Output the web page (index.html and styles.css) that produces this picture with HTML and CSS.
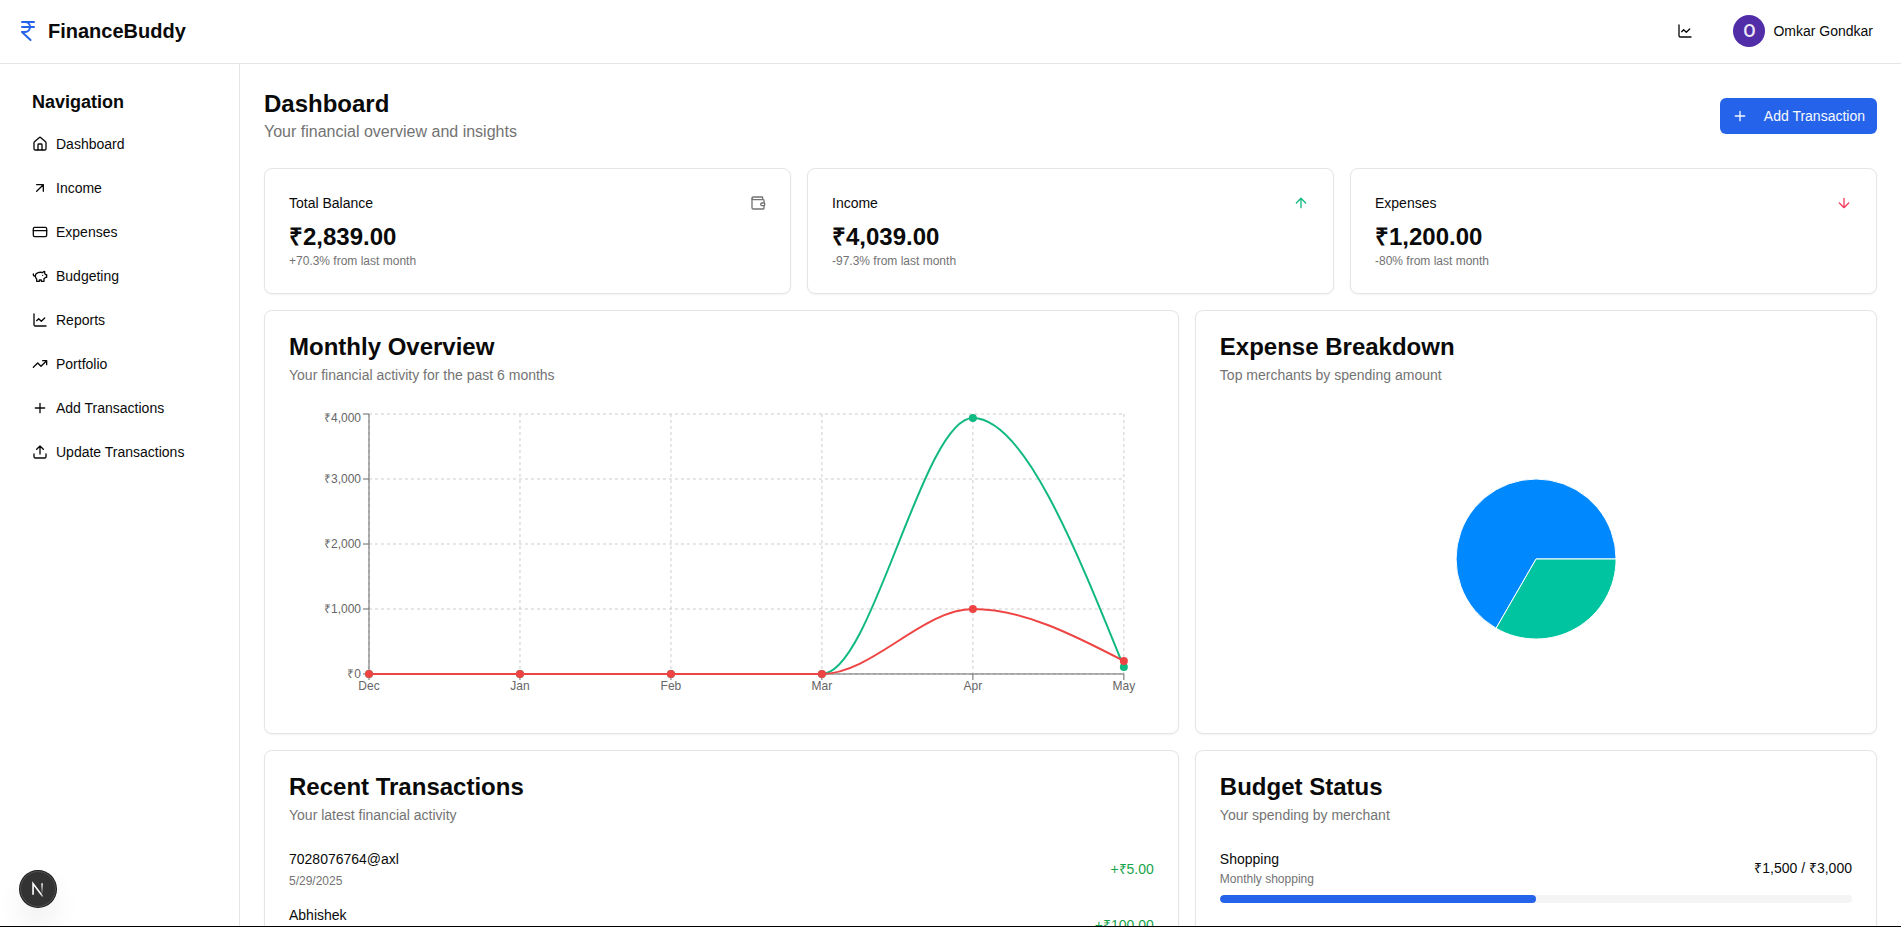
FILE: index.html
```html
<!DOCTYPE html>
<html lang="en">
<head>
<meta charset="utf-8">
<meta name="viewport" content="width=device-width, initial-scale=1">
<title>FinanceBuddy</title>
<link rel="stylesheet" href="styles.css">
</head>
<body>
<svg class="sprite" aria-hidden="true">
  <symbol id="rupee" viewBox="0 0 24 24"><path d="M6 3h12M6 8h12M6 13l8.500 8M6 13h3M9 13c6.667 0 6.667-10 0-10"/></symbol>
  <symbol id="house" viewBox="0 0 24 24"><path d="M15 21v-8a1 1 0 0 0-1-1h-4a1 1 0 0 0-1 1v8"/><path d="M3 10a2 2 0 0 1 .709-1.528l7-5.999a2 2 0 0 1 2.582 0l7 5.999A2 2 0 0 1 21 10v9a2 2 0 0 1-2 2H5a2 2 0 0 1-2-2z"/></symbol>
  <symbol id="arrow-up-right" viewBox="0 0 24 24"><path d="M7 7h10v10M7 17 17 7"/></symbol>
  <symbol id="card" viewBox="0 0 24 24"><rect width="20" height="14" x="2" y="5" rx="2"/><path d="M2 10h20"/></symbol>
  <symbol id="piggy" viewBox="0 0 24 24"><path d="M19 5c-1.500 0-2.800 1.400-3 2-3.500-1.500-11-.3-11 5 0 1.800 0 3 2 4.500V20h4v-2h3v2h4v-4c1-.5 1.700-1 2-2h2v-4h-2c0-1-.5-1.500-1-2V5z"/><path d="M2 9v1c0 1.100.9 2 2 2h1M16 11h.01"/></symbol>
  <symbol id="chart" viewBox="0 0 24 24"><path d="M3 3v16a2 2 0 0 0 2 2h16"/><path d="m19 9-5 5-4-4-3 3"/></symbol>
  <symbol id="trend" viewBox="0 0 24 24"><path d="m22 7-8.500 8.500-5-5L2 17M16 7h6v6"/></symbol>
  <symbol id="plus" viewBox="0 0 24 24"><path d="M5 12h14M12 5v14"/></symbol>
  <symbol id="upload" viewBox="0 0 24 24"><path d="M21 15v4a2 2 0 0 1-2 2H5a2 2 0 0 1-2-2v-4M17 8l-5-5-5 5M12 3v12"/></symbol>
  <symbol id="wallet" viewBox="0 0 24 24"><path d="M19 7V4a1 1 0 0 0-1-1H5a2 2 0 0 0 0 4h15a1 1 0 0 1 1 1v4h-3a2 2 0 0 0 0 4h3a1 1 0 0 0 1-1v-2a1 1 0 0 0-1-1"/><path d="M3 5v14a2 2 0 0 0 2 2h15a1 1 0 0 0 1-1v-4"/></symbol>
  <symbol id="arrow-up" viewBox="0 0 24 24"><path d="m5 12 7-7 7 7M12 19V5"/></symbol>
  <symbol id="arrow-down" viewBox="0 0 24 24"><path d="M12 5v14M19 12l-7 7-7-7"/></symbol>
</svg>

<div class="app">
  <header class="topbar">
    <a class="brand" href="#"><svg class="icon icon-lg"><use href="#rupee"/></svg>FinanceBuddy</a>
    <div class="topbar-actions">
      <button class="icon-button" type="button" aria-label="Reports"><svg class="icon"><use href="#chart"/></svg></button>
      <button class="user" type="button"><span class="avatar">O</span>Omkar Gondkar</button>
    </div>
  </header>

  <div class="body">
    <aside class="sidebar">
      <h2 class="nav-title">Navigation</h2>
      <nav class="nav">
        <a href="#"><svg class="icon"><use href="#house"/></svg>Dashboard</a>
        <a href="#"><svg class="icon"><use href="#arrow-up-right"/></svg>Income</a>
        <a href="#"><svg class="icon"><use href="#card"/></svg>Expenses</a>
        <a href="#"><svg class="icon"><use href="#piggy"/></svg>Budgeting</a>
        <a href="#"><svg class="icon"><use href="#chart"/></svg>Reports</a>
        <a href="#"><svg class="icon"><use href="#trend"/></svg>Portfolio</a>
        <a href="#"><svg class="icon"><use href="#plus"/></svg>Add Transactions</a>
        <a href="#"><svg class="icon"><use href="#upload"/></svg>Update Transactions</a>
      </nav>
    </aside>

    <main class="main">
      <div class="page-head">
        <div>
          <h1>Dashboard</h1>
          <p class="lead">Your financial overview and insights</p>
        </div>
        <button class="primary" type="button"><svg class="icon"><use href="#plus"/></svg>Add Transaction</button>
      </div>

      <div class="stats">
        <section class="card">
          <div class="stat-head"><h3>Total Balance</h3><svg class="icon muted"><use href="#wallet"/></svg></div>
          <p class="stat-value">₹2,839.00</p>
          <p class="small">+70.3% from last month</p>
        </section>
        <section class="card">
          <div class="stat-head"><h3>Income</h3><svg class="icon up"><use href="#arrow-up"/></svg></div>
          <p class="stat-value">₹4,039.00</p>
          <p class="small">-97.3% from last month</p>
        </section>
        <section class="card">
          <div class="stat-head"><h3>Expenses</h3><svg class="icon down"><use href="#arrow-down"/></svg></div>
          <p class="stat-value">₹1,200.00</p>
          <p class="small">-80% from last month</p>
        </section>
      </div>

      <div class="panels">
        <section class="card wide">
          <h2 class="card-title">Monthly Overview</h2>
          <p class="card-desc">Your financial activity for the past 6 months</p>
          <svg class="chart" viewBox="0 0 865 300" role="img" aria-label="Income and expenses by month">
            <g class="grid">
              <path d="M80 265H835M80 200H835M80 135H835M80 70H835M80 5H835"/>
              <path d="M80 5V265"/><path d="M231 5V265"/><path d="M382 5V265"/><path d="M533 5V265"/><path d="M684 5V265"/><path d="M835 5V265"/>
            </g>
            <g class="axis">
              <path d="M80 265H835M80 5V265"/>
              <path d="M74 265h6M74 200h6M74 135h6M74 70h6M74 5h6"/>
              <path d="M80 265v6M231 265v6M382 265v6M533 265v6M684 265v6M835 265v6"/>
            </g>
            <g class="ticks y">
              <text x="72" y="269">₹0</text><text x="72" y="204">₹1,000</text><text x="72" y="139">₹2,000</text><text x="72" y="74">₹3,000</text><text x="72" y="13">₹4,000</text>
            </g>
            <g class="ticks x">
              <text x="80" y="281">Dec</text><text x="231" y="281">Jan</text><text x="382" y="281">Feb</text><text x="533" y="281">Mar</text><text x="684" y="281">Apr</text><text x="835" y="281">May</text>
            </g>
            <g class="series income">
              <path d="M80 265H533C583 265 634 9 684 9C734 9 785 134 835 258"/>
              <circle cx="80" cy="265" r="3"/><circle cx="231" cy="265" r="3"/><circle cx="382" cy="265" r="3"/><circle cx="533" cy="265" r="3"/><circle cx="684" cy="9" r="3"/><circle cx="835" cy="258" r="3"/>
            </g>
            <g class="series expense">
              <path d="M80 265H533C583 265 634 200 684 200C734 200 785 226 835 252"/>
              <circle cx="80" cy="265" r="3"/><circle cx="231" cy="265" r="3"/><circle cx="382" cy="265" r="3"/><circle cx="533" cy="265" r="3"/><circle cx="684" cy="200" r="3"/><circle cx="835" cy="252" r="3"/>
            </g>
          </svg>
        </section>

        <section class="card narrow">
          <h2 class="card-title">Expense Breakdown</h2>
          <p class="card-desc">Top merchants by spending amount</p>
          <svg class="chart pie" viewBox="0 0 632 300" role="img" aria-label="Spending by merchant">
            <path class="slice-a" d="M316 150H396A80 80 0 1 0 276 219.280Z"/>
            <path class="slice-b" d="M316 150L276 219.280A80 80 0 0 0 396 150Z"/>
          </svg>
        </section>

        <section class="card wide">
          <h2 class="card-title">Recent Transactions</h2>
          <p class="card-desc">Your latest financial activity</p>
          <ul class="transactions">
            <li><div><p class="name">7028076764@axl</p><p class="small">5/29/2025</p></div><span class="amount">+₹5.00</span></li>
            <li><div><p class="name">Abhishek</p><p class="small">5/29/2025</p></div><span class="amount">+₹100.00</span></li>
          </ul>
        </section>

        <section class="card narrow">
          <h2 class="card-title">Budget Status</h2>
          <p class="card-desc">Your spending by merchant</p>
          <div class="budget">
            <div class="budget-row"><div><p class="name">Shopping</p><p class="small">Monthly shopping</p></div><span>₹1,500 / ₹3,000</span></div>
            <div class="track" role="progressbar" aria-label="Shopping" aria-valuenow="50" aria-valuemin="0" aria-valuemax="100"><div class="fill" style="width: 50%"></div></div>
          </div>
        </section>
      </div>
    </main>
  </div>
</div>

<button class="dev-badge" type="button" aria-label="Developer tools">
  <svg viewBox="0 0 40 40" fill="none">
    <defs>
      <linearGradient id="fade-a" x1="17" y1="20" x2="26" y2="30" gradientUnits="userSpaceOnUse"><stop offset="0.600" stop-color="#fff"/><stop offset="1" stop-color="#fff" stop-opacity="0"/></linearGradient>
      <linearGradient id="fade-b" x1="24" y1="13" x2="24" y2="26" gradientUnits="userSpaceOnUse"><stop stop-color="#fff"/><stop offset="1" stop-color="#fff" stop-opacity="0"/></linearGradient>
    </defs>
    <path d="M14.500 26.500V14L25.500 28.500" stroke="url(#fade-a)" stroke-width="1.800"/>
    <path d="M24.500 13.500V25" stroke="url(#fade-b)" stroke-width="1.800"/>
  </svg>
</button>
</body>
</html>
```
FILE: styles.css
```css
* {
  box-sizing: border-box;
}

body,
h1,
h2,
h3,
p,
ul {
  margin: 0;
  padding: 0;
}

body {
  color: #0a0a0a;
  background: #fff;
  font-family: "Liberation Sans", Arial, sans-serif;
  font-size: 14px;
  line-height: 20px;
}

button {
  font: inherit;
  color: inherit;
  background: none;
  border: 0;
  cursor: pointer;
}

a {
  color: inherit;
  text-decoration: none;
}

.sprite {
  display: none;
}

.icon {
  flex: none;
  width: 16px;
  height: 16px;
  fill: none;
  stroke: currentColor;
  stroke-width: 2;
  stroke-linecap: round;
  stroke-linejoin: round;
}

.icon-lg {
  width: 24px;
  height: 24px;
  color: #2563eb;
}

.app {
  display: flex;
  flex-direction: column;
  height: 100vh;
  overflow: hidden;
  border-bottom: 1px solid #000;
}

.topbar {
  display: flex;
  flex: none;
  align-items: center;
  justify-content: space-between;
  height: 64px;
  padding: 0 16px 1px;
  border-bottom: 1px solid #e5e5e5;
}

.brand {
  display: flex;
  align-items: center;
  gap: 8px;
  font-size: 20px;
  line-height: 28px;
  font-weight: 700;
}

.topbar-actions {
  display: flex;
  align-items: center;
  gap: 16px;
}

.icon-button {
  display: flex;
  align-items: center;
  justify-content: center;
  width: 40px;
  height: 40px;
  padding: 0;
}

.user {
  display: flex;
  align-items: center;
  gap: 8px;
  padding: 4px 12px;
}

.avatar {
  width: 32px;
  height: 32px;
  border-radius: 50%;
  background: #512da8;
  color: #ede7f6;
  font-family: Roboto, sans-serif;
  font-size: 18px;
  line-height: 32px;
  font-weight: 500;
  text-align: center;
}

.body {
  display: flex;
  flex: 1;
  min-height: 0;
}

.sidebar {
  flex: none;
  width: 240px;
  padding: 24px 16px;
  border-right: 1px solid #e5e5e5;
}

.nav-title {
  padding: 0 16px;
  font-size: 18px;
  line-height: 28px;
  font-weight: 600;
}

.nav {
  display: flex;
  flex-direction: column;
  gap: 4px;
  margin-top: 8px;
}

.nav a {
  display: flex;
  align-items: center;
  gap: 8px;
  height: 40px;
  padding: 0 16px;
}

.main {
  flex: 1;
  min-width: 0;
  padding: 24px;
  overflow: hidden;
}

.page-head {
  display: flex;
  align-items: center;
  justify-content: space-between;
  margin-bottom: 24px;
}

h1 {
  font-size: 24px;
  line-height: 32px;
}

.lead {
  color: #737373;
  font-size: 16px;
  line-height: 24px;
}

.primary {
  display: flex;
  align-items: center;
  gap: 16px;
  height: 36px;
  padding: 0 12px;
  border-radius: 6px;
  background: #2563eb;
  color: #f8fafc;
}

.stats {
  display: grid;
  grid-template-columns: repeat(3, 1fr);
  gap: 16px;
  margin-bottom: 16px;
}

.panels {
  display: grid;
  grid-template-columns: repeat(7, 1fr);
  gap: 16px;
}

.wide {
  grid-column: span 4;
}

.narrow {
  grid-column: span 3;
}

.card {
  min-width: 0;
  padding: 24px;
  border: 1px solid #e5e5e5;
  border-radius: 8px;
  background: #fff;
  box-shadow: 0 1px 2px rgba(0, 0, 0, 0.05);
}

.stat-head {
  display: flex;
  align-items: center;
  justify-content: space-between;
  margin-bottom: 8px;
}

.stat-head h3 {
  font-size: 14px;
  font-weight: 500;
}

.stat-value {
  font-size: 24px;
  line-height: 32px;
  font-weight: 700;
}

.small {
  color: #737373;
  font-size: 12px;
  line-height: 16px;
}

.muted {
  color: #737373;
}

.up {
  color: #10b981;
}

.down {
  color: #f43f5e;
}

.card-title {
  font-size: 24px;
  line-height: 24px;
  font-weight: 600;
}

.card-desc {
  margin: 6px 0 24px;
  color: #737373;
}

.chart {
  display: block;
  width: 100%;
  height: 300px;
}

.grid path {
  fill: none;
  stroke: #ccc;
  stroke-dasharray: 3 3;
}

.axis path {
  fill: none;
  stroke: #666;
}

.ticks {
  fill: #666;
  font-size: 12px;
}

.ticks.y {
  text-anchor: end;
}

.ticks.x {
  text-anchor: middle;
}

.series path {
  fill: none;
  stroke: currentColor;
  stroke-width: 2;
}

.series circle {
  fill: currentColor;
  stroke: currentColor;
  stroke-width: 2;
}

.income {
  color: #10b981;
}

.expense {
  color: #ef4444;
}

.pie path {
  stroke: #fff;
}

.slice-a {
  fill: #0088fe;
}

.slice-b {
  fill: #00c49f;
}

.transactions {
  display: flex;
  flex-direction: column;
  gap: 16px;
  list-style: none;
}

.transactions li {
  display: flex;
  align-items: center;
  justify-content: space-between;
}

.transactions .small {
  margin-top: 4px;
}

.amount {
  color: #16a34a;
}

.budget {
  display: flex;
  flex-direction: column;
  gap: 8px;
}

.budget-row {
  display: flex;
  align-items: center;
  justify-content: space-between;
}

.budget-row .small {
  margin-top: 2px;
}

.track {
  height: 8px;
  overflow: hidden;
  border-radius: 4px;
  background: #f4f4f5;
}

.fill {
  height: 100%;
  border-radius: 4px;
  background: #2563eb;
}

.dev-badge {
  position: fixed;
  bottom: 20px;
  left: 20px;
  width: 36px;
  height: 36px;
  padding: 0;
  border-radius: 50%;
  background: #333;
  box-shadow: 0 0 0 1px #171717, inset 0 0 0 1px rgba(255, 255, 255, 0.14), 0 16px 32px -8px rgba(0, 0, 0, 0.24);
}

.dev-badge svg {
  display: block;
  width: 36px;
  height: 36px;
}
```
